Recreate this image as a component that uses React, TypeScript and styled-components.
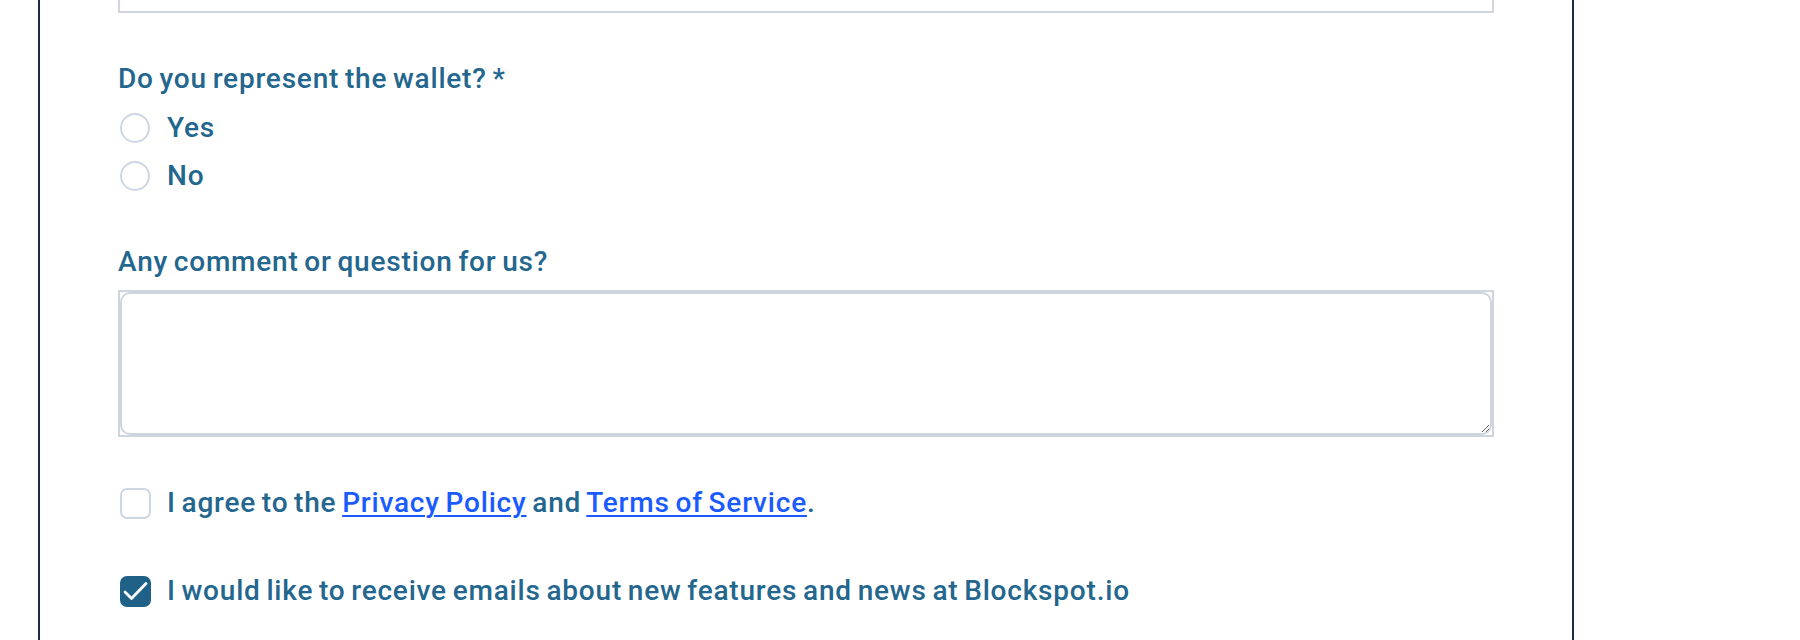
import React from "react";
import styled, { createGlobalStyle } from "styled-components";

const Global = createGlobalStyle`
  html, body { margin: 0; padding: 0; background: #ffffff; }
  body { font-family: Roboto, "Liberation Sans", Arial, sans-serif; overflow: hidden; }
`;

const Page = styled.div`
  width: 1800px;
  height: 640px;
  overflow: hidden;
  background: #ffffff;
`;

const Card = styled.section`
  margin-left: 38px;
  width: 1536px;
  box-sizing: border-box;
  border-left: 2px solid #1f2a44;
  border-right: 2px solid #1f2a44;
  padding: 0 78px 80px;
  margin-top: -40px;
  min-height: 760px;
  box-shadow: 0 0 4px rgba(0, 0, 0, 0.04);
`;

const TopInput = styled.div`
  height: 53px;
  box-sizing: border-box;
  border: 2px solid #d2d6dc;
  border-top: none;
`;

const Field = styled.div<{ $gap: number }>`
  margin-top: ${(p) => p.$gap}px;
  display: flex;
  flex-direction: column;
`;

const textStyle = `
  font-size: 28px;
  line-height: 32px;
  color: #23668e;
  font-weight: 500;
  letter-spacing: 0.8px;
  word-spacing: -2px;
`;

const Label = styled.label`
  ${textStyle}
`;

const OptionList = styled.div`
  margin-top: 17px;
  padding-left: 2px;
  display: flex;
  flex-direction: column;
  gap: 16px;
`;

const OptionRow = styled.label`
  display: flex;
  align-items: center;
  gap: 17px;
  height: 32px;
  ${textStyle}
`;

const RadioCircle = styled.span`
  width: 30px;
  height: 30px;
  box-sizing: border-box;
  border-radius: 50%;
  border: 2px solid #cdd7e3;
  background: #fff;
  flex: none;
`;

const AreaFrame = styled.div`
  margin-top: 12px;
  border: 2px solid #cdd5df;
  display: flex;
`;

const TextArea = styled.textarea`
  flex: 1;
  height: 143px;
  box-sizing: border-box;
  border: 2px solid #cdd5df;
  border-radius: 10px;
  outline: none;
  margin: 0;
  padding: 10px 14px;
  font-family: Roboto, "Liberation Sans", Arial, sans-serif;
  font-size: 20px;
  color: #20638a;
  background: #fff;
  resize: both;
`;

const CheckRow = styled.label<{ $gap: number }>`
  margin-top: ${(p) => p.$gap}px;
  padding-left: 2px;
  display: flex;
  align-items: center;
  gap: 16px;
  height: 32px;
  ${textStyle}
`;

const Box = styled.span<{ $checked?: boolean }>`
  width: 31px;
  height: 31px;
  box-sizing: border-box;
  border-radius: 7px;
  border: 2px solid ${(p) => (p.$checked ? "#1f6187" : "#cdd7e3")};
  background: ${(p) => (p.$checked ? "#1f6187" : "#fff")};
  display: flex;
  align-items: center;
  justify-content: center;
  flex: none;
`;

const Link = styled.a`
  color: #1a5bff;
  text-decoration: underline;
  text-decoration-thickness: 2px;
  text-underline-offset: 3px;
`;

export default function App() {
  return (
    <Page>
      <Global />
      <Card>
        <TopInput />
        <Field $gap={50}>
          <Label>Do you represent the wallet? *</Label>
          <OptionList>
            <OptionRow>
              <RadioCircle />
              Yes
            </OptionRow>
            <OptionRow>
              <RadioCircle />
              No
            </OptionRow>
          </OptionList>
        </Field>
        <Field $gap={54}>
          <Label>Any comment or question for us?</Label>
          <AreaFrame>
            <TextArea />
          </AreaFrame>
        </Field>
        <CheckRow $gap={50}>
          <Box />
          <span>
            I agree to the <Link href="#">Privacy Policy</Link> and{" "}
            <Link href="#">Terms of Service</Link>.
          </span>
        </CheckRow>
        <CheckRow $gap={56}>
          <Box $checked>
            <svg width="25" height="21" viewBox="0 0 25 21" fill="none">
              <path
                d="M2 11 L8.5 17.5 L23 2.5"
                stroke="#ffffff"
                strokeWidth="2.8"
                strokeLinecap="round"
                strokeLinejoin="round"
              />
            </svg>
          </Box>
          <span>I would like to receive emails about new features and news at Blockspot.io</span>
        </CheckRow>
      </Card>
    </Page>
  );
}
